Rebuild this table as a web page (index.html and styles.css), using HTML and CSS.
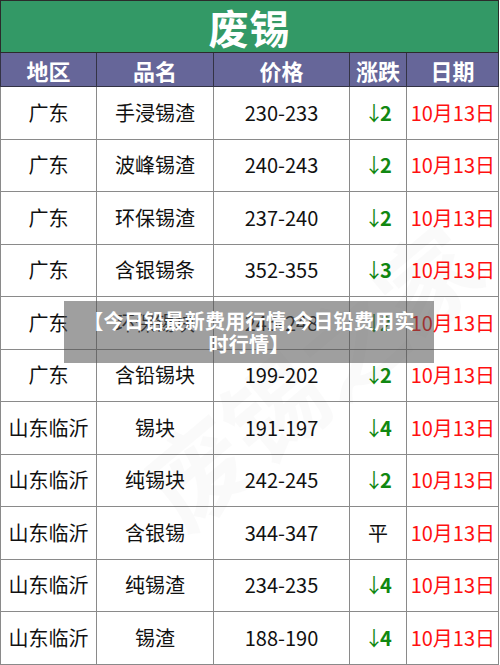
FILE: index.html
```html
<!DOCTYPE html>
<html lang="zh">
<head>
<meta charset="utf-8">
<title>废锡</title>
<link rel="stylesheet" href="styles.css">
</head>
<body>
<div class="sheet">
  <table class="price">
    <colgroup>
      <col class="c1"><col class="c2"><col class="c3"><col class="c4"><col class="c5">
    </colgroup>
    <thead>
      <tr class="title"><th colspan="5">废锡</th></tr>
      <tr class="head"><th>地区</th><th>品名</th><th>价格</th><th>涨跌</th><th>日期</th></tr>
    </thead>
    <tbody>
      <tr><td>广东</td><td>手浸锡渣</td><td>230-233</td><td class="chg"><span class="ar">↓</span>2</td><td class="date">10月13日</td></tr>
      <tr><td>广东</td><td>波峰锡渣</td><td>240-243</td><td class="chg"><span class="ar">↓</span>2</td><td class="date">10月13日</td></tr>
      <tr><td>广东</td><td>环保锡渣</td><td>237-240</td><td class="chg"><span class="ar">↓</span>2</td><td class="date">10月13日</td></tr>
      <tr><td>广东</td><td>含银锡条</td><td>352-355</td><td class="chg"><span class="ar">↓</span>3</td><td class="date">10月13日</td></tr>
      <tr><td>广东</td><td>环保锡块</td><td>245-248</td><td class="chg"><span class="ar">↓</span>2</td><td class="date">10月13日</td></tr>
      <tr><td>广东</td><td>含铅锡块</td><td>199-202</td><td class="chg"><span class="ar">↓</span>2</td><td class="date">10月13日</td></tr>
      <tr><td>山东临沂</td><td>锡块</td><td>191-197</td><td class="chg"><span class="ar">↓</span>4</td><td class="date">10月13日</td></tr>
      <tr><td>山东临沂</td><td>纯锡块</td><td>242-245</td><td class="chg"><span class="ar">↓</span>2</td><td class="date">10月13日</td></tr>
      <tr><td>山东临沂</td><td>含银锡</td><td>344-347</td><td class="flat">平</td><td class="date">10月13日</td></tr>
      <tr><td>山东临沂</td><td>纯锡渣</td><td>234-235</td><td class="chg"><span class="ar">↓</span>4</td><td class="date">10月13日</td></tr>
      <tr><td>山东临沂</td><td>锡渣</td><td>188-190</td><td class="chg"><span class="ar">↓</span>4</td><td class="date">10月13日</td></tr>
    </tbody>
  </table>
  <div class="watermark">废锡之家</div>
  <div class="banner">【今日铅最新费用行情,今日铅费用实时行情】</div>
</div>
</body>
</html>
```

FILE: styles.css
```css
html, body {
  margin: 0;
  padding: 0;
  background: #ffffff;
}
body {
  font-family: "Noto Sans CJK SC", "Noto Sans", sans-serif;
  color: #111;
}
.sheet {
  position: relative;
  width: 500px;
  height: 665px;
  overflow: hidden;
}
.price {
  border-collapse: collapse;
  table-layout: fixed;
  width: 498px;
}
.c1 { width: 96px; }
.c2 { width: 117px; }
.c3 { width: 136px; }
.c4 { width: 57px; }
.c5 { width: 92px; }
.price th, .price td {
  padding: 0;
  text-align: center;
  vertical-align: middle;
  border: 1px solid #8a8a8a;
  white-space: nowrap;
}
.title th {
  height: 51px;
  background: #339966;
  color: #fff;
  font-size: 40px;
  font-weight: 700;
  line-height: 1.1;
  border: 1px solid #2b2b2b;
  letter-spacing: 1px;
}
.head th {
  height: 33px;
  background: #666699;
  color: #fff;
  font-size: 22px;
  font-weight: 700;
  line-height: 1;
  border: 1px solid #333344;
}
.price td {
  height: 51.5px;
  font-size: 20px;
  line-height: 1;
  color: #111;
}
.price td.chg {
  color: #118811;
  font-weight: 700;
}
.chg .ar {
  font-weight: 400;
  margin-right: -4px;
}
.price td.date {
  color: #ff1010;
  text-align: right;
  padding-right: 3px;
}
.watermark {
  position: absolute;
  left: 110px;
  top: 300px;
  font-size: 100px;
  font-weight: 700;
  color: rgba(0, 0, 0, 0.018);
  transform: rotate(-40deg);
  transform-origin: center;
  pointer-events: none;
  white-space: nowrap;
}
.banner {
  position: absolute;
  left: 64px;
  top: 301px;
  width: 370px;
  height: 62px;
  box-sizing: border-box;
  padding: 8px 10px 0;
  background: rgba(80, 80, 80, 0.55);
  color: #fff;
  font-size: 20px;
  letter-spacing: 0.3px;
  font-weight: 700;
  line-height: 23px;
  text-align: center;
}
```
